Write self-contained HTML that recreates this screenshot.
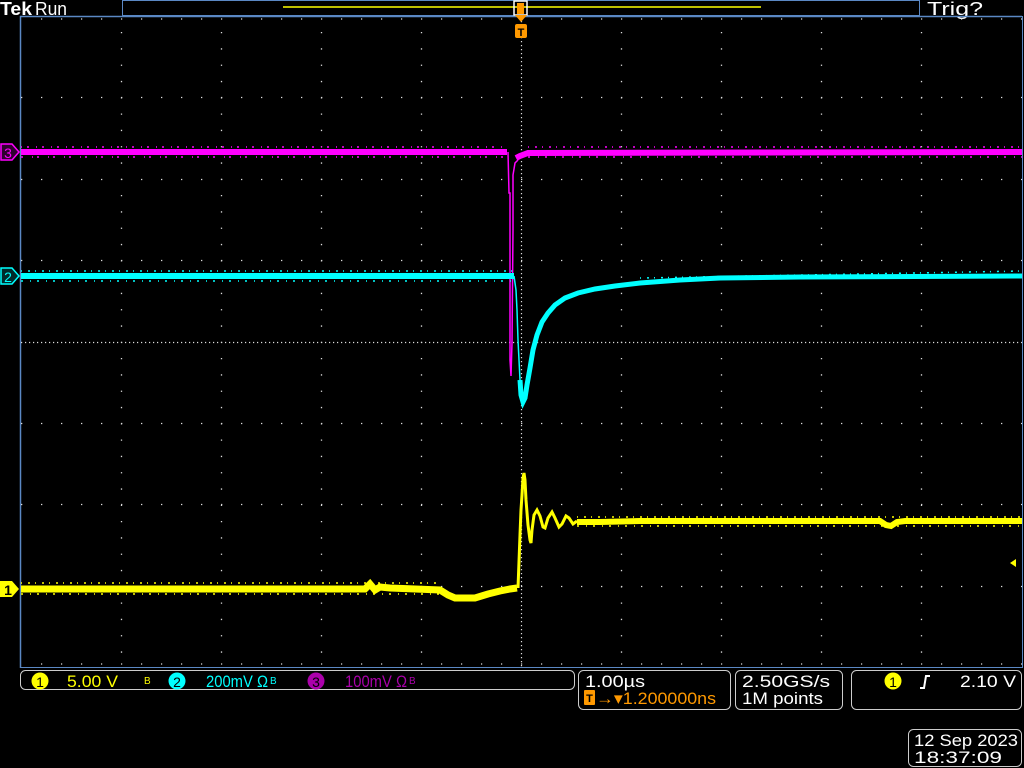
<!DOCTYPE html>
<html><head><meta charset="utf-8"><style>
html,body{margin:0;padding:0;background:#000;width:1024px;height:768px;overflow:hidden}
svg{display:block}
text{font-family:"Liberation Sans",sans-serif}
</style></head><body>
<svg width="1024" height="768" viewBox="0 0 1024 768" xmlns="http://www.w3.org/2000/svg">
<rect width="1024" height="768" fill="#000"/>
<!-- top bar -->
<text x="0" y="15" fill="#fff" font-size="18" font-weight="bold" textLength="32" lengthAdjust="spacingAndGlyphs">Tek</text>
<text x="35" y="15" fill="#fff" font-size="18" textLength="32" lengthAdjust="spacingAndGlyphs">Run</text>
<rect x="122.5" y="0.5" width="797" height="15" fill="none" stroke="#5b88c4" stroke-width="1"/>
<line x1="283" y1="7" x2="761" y2="7" stroke="#ffff00" stroke-width="1.5"/>
<rect x="514" y="1" width="13" height="14" fill="none" stroke="#fff" stroke-width="1.5"/>
<rect x="517" y="3" width="7" height="11" fill="#ff9900"/>
<text x="927" y="15" fill="#fff" font-size="18" textLength="56" lengthAdjust="spacingAndGlyphs">Trig?</text>
<!-- graticule border -->
<line x1="20.5" y1="16" x2="20.5" y2="668" stroke="#5b88c4" stroke-width="1.5"/>
<line x1="20" y1="16.5" x2="1022" y2="16.5" stroke="#5b88c4" stroke-width="1.5"/>
<line x1="1022.5" y1="16" x2="1022.5" y2="668" stroke="#5b88c4" stroke-width="1"/>
<line x1="20" y1="667.5" x2="1022" y2="667.5" stroke="#5b88c4" stroke-width="1"/>
<!-- grid dots -->
<g stroke="#ddd" stroke-width="1.3" stroke-dasharray="1.3 18.7">
<line x1="21" y1="97.5" x2="1022" y2="97.5"/>
<line x1="21" y1="179.5" x2="1022" y2="179.5"/>
<line x1="21" y1="260.5" x2="1022" y2="260.5"/>
<line x1="21" y1="423.5" x2="1022" y2="423.5"/>
<line x1="21" y1="504.5" x2="1022" y2="504.5"/>
<line x1="21" y1="586.5" x2="1022" y2="586.5"/>
</g>
<g stroke="#ddd" stroke-width="1.3" stroke-dasharray="1.3 15">
<line x1="121.5" y1="32" x2="121.5" y2="667"/>
<line x1="221.5" y1="32" x2="221.5" y2="667"/>
<line x1="321.5" y1="32" x2="321.5" y2="667"/>
<line x1="421.5" y1="32" x2="421.5" y2="667"/>
<line x1="621.5" y1="32" x2="621.5" y2="667"/>
<line x1="721.5" y1="32" x2="721.5" y2="667"/>
<line x1="821.5" y1="32" x2="821.5" y2="667"/>
<line x1="921.5" y1="32" x2="921.5" y2="667"/>
</g>
<g stroke="#ddd" stroke-width="1.2" stroke-dasharray="1.2 2.8">
<line x1="21" y1="342.5" x2="1022" y2="342.5"/>
<line x1="521.5" y1="17" x2="521.5" y2="667"/>
</g>
<g stroke="#ddd" stroke-width="1.2" stroke-dasharray="1.2 18.8">
<line x1="41" y1="19" x2="1022" y2="19"/>
<line x1="41" y1="664" x2="1022" y2="664"/>
</g>
<!-- trigger T marker -->
<polygon points="515,15 527,15 521,22" fill="#ff9900"/>
<rect x="515" y="24" width="12" height="14" rx="2" fill="#ff9900"/>
<text x="521" y="36" fill="#000" font-size="11" font-weight="bold" text-anchor="middle">T</text>
<!-- magenta trace ch3 -->
<polyline fill="none" stroke="#ff00ff" stroke-width="6" points="21,152 507,152"/>
<polyline fill="none" stroke="#ff00ff" stroke-width="1.5" stroke-dasharray="1 5 2 7" points="21,147 507,147"/>
<polyline fill="none" stroke="#ff00ff" stroke-width="1.5" stroke-dasharray="2 9 1 4" points="21,157 507,157"/>
<polyline fill="none" stroke="#ff00ff" stroke-width="6" points="516,158 520,156 528,153 1022,152"/>
<polyline fill="none" stroke="#ff00ff" stroke-width="1.5" stroke-dasharray="1 6 2 5" points="528,147 1022,147"/>
<polyline fill="none" stroke="#ff00ff" stroke-width="1.5" stroke-dasharray="2 8 1 6" points="528,157 1022,157"/>
<g fill="none" stroke="#ff00ff" stroke-width="1.5">
<polyline points="508,152 509,193 510,193 510,360 511,376 512,343 513,230 513,175 515,163 518,160"/>
</g>
<!-- cyan ch2 -->
<polyline fill="none" stroke="#00ffff" stroke-width="6" points="21,276 514,276"/>
<polyline fill="none" stroke="#00ffff" stroke-width="1.5" stroke-dasharray="1 6 2 5" points="21,271 514,271"/>
<polyline fill="none" stroke="#00ffff" stroke-width="1.5" stroke-dasharray="2 7 1 6" points="21,281 514,281"/>
<polyline fill="none" stroke="#00ffff" stroke-width="1.5" points="514,276 516,290 517,310 518,340 519,360 520,380"/>
<polyline fill="none" stroke="#00ffff" stroke-width="5" points="520,380 521,395 523,402 525,398 527,385 530,368 533,350 537,335 542,322 548,313 555,305 565,298 578,293 595,289 615,286 640,283 680,280 720,278 800,277 1022,276"/>
<polyline fill="none" stroke="#00ffff" stroke-width="1.5" stroke-dasharray="1 6 2 5" points="640,278 1022,271"/>
<!-- yellow ch1 -->
<polyline fill="none" stroke="#ffff00" stroke-width="7" points="21,589 365,589 370,584 375,590 380,587 390,588 440,590 448,595 455,598 475,598 488,594 500,591 510,589 517,588"/>
<polyline fill="none" stroke="#ffff00" stroke-width="1.5" stroke-dasharray="1 6 2 5" points="21,583 440,583"/>
<polyline fill="none" stroke="#ffff00" stroke-width="1.5" stroke-dasharray="2 7 1 6" points="21,594 440,594"/>
<polyline fill="none" stroke="#ffff00" stroke-width="3" points="518,588 520,535 521,510 522,495 523,478 524,473 525,480 526,500 528,525 530,540 531,543 532,530 534,515 537,510 540,516 543,527 545,528 548,518 552,512 555,518 559,527 562,524 566,516 569,518 573,524 577,521"/>
<polyline fill="none" stroke="#ffff00" stroke-width="6" points="577,522 600,522 640,521 700,521 880,521 886,525 891,526 897,522 905,521 1022,521"/>
<polyline fill="none" stroke="#ffff00" stroke-width="1.5" stroke-dasharray="1 6 2 5" points="577,517 1022,517"/>
<polyline fill="none" stroke="#ffff00" stroke-width="1.5" stroke-dasharray="2 7 1 6" points="577,526 1022,526"/>
<!-- ch markers left -->
<polygon points="1,144 12,144 19,152 12,160 1,160" fill="#300030" stroke="#ff00ff" stroke-width="1.5"/>
<text x="8" y="158" fill="#ff00ff" font-size="14" text-anchor="middle">3</text>
<polygon points="1,268 12,268 19,276 12,284 1,284" fill="#002a2a" stroke="#00ffff" stroke-width="1.5"/>
<text x="8" y="282" fill="#00ffff" font-size="14" text-anchor="middle">2</text>
<polygon points="0,581 12,581 19,589 12,597 0,597" fill="#ffff00"/>
<text x="8" y="595" fill="#000" font-size="14" font-weight="bold" text-anchor="middle">1</text>
<!-- trigger level marker -->
<polygon points="1010,563 1016,559 1016,567" fill="#ffff00"/>
<!-- bottom status boxes -->
<g fill="none" stroke="#ccc" stroke-width="1">
<rect x="20.5" y="670.5" width="554" height="19" rx="5"/>
<rect x="578.5" y="670.5" width="152" height="39" rx="5"/>
<rect x="735.5" y="670.5" width="107" height="39" rx="5"/>
<rect x="851.5" y="670.5" width="170" height="39" rx="5"/>
<rect x="908.5" y="729.5" width="113" height="37" rx="5"/>
</g>
<circle cx="40" cy="681" r="8.5" fill="#ffff00"/>
<text x="40" y="687" fill="#000" font-size="14" text-anchor="middle">1</text>
<text x="67" y="687" fill="#ffff00" font-size="17" textLength="51" lengthAdjust="spacingAndGlyphs">5.00 V</text>
<text x="144" y="684" fill="#ffff00" font-size="10">B</text>
<circle cx="177" cy="681" r="8.5" fill="#00ffff"/>
<text x="177" y="687" fill="#000" font-size="14" text-anchor="middle">2</text>
<text x="206" y="687" fill="#00ffff" font-size="17" textLength="62" lengthAdjust="spacingAndGlyphs">200mV Ω</text>
<text x="270" y="684" fill="#00ffff" font-size="10">B</text>
<circle cx="316" cy="681" r="8.5" fill="#aa00aa"/>
<text x="316" y="687" fill="#000" font-size="14" text-anchor="middle">3</text>
<text x="345" y="687" fill="#aa00aa" font-size="17" textLength="62" lengthAdjust="spacingAndGlyphs">100mV Ω</text>
<text x="409" y="684" fill="#aa00aa" font-size="10">B</text>
<text x="585" y="687" fill="#fff" font-size="17" textLength="60" lengthAdjust="spacingAndGlyphs">1.00µs</text>
<rect x="584" y="690" width="11" height="15" rx="1" fill="#ff9900"/>
<text x="589.5" y="702" fill="#000" font-size="11" font-weight="bold" text-anchor="middle">T</text>
<text x="596" y="704" fill="#ff9900" font-size="17" textLength="120" lengthAdjust="spacingAndGlyphs">→▾1.200000ns</text>
<text x="742" y="687" fill="#fff" font-size="17" textLength="88" lengthAdjust="spacingAndGlyphs">2.50GS/s</text>
<text x="742" y="704" fill="#fff" font-size="17" textLength="81" lengthAdjust="spacingAndGlyphs">1M points</text>
<circle cx="893" cy="681" r="8.5" fill="#ffff00"/>
<text x="893" y="687" fill="#000" font-size="14" text-anchor="middle">1</text>
<path d="M920,688 L924,688 L926,676 L930,676" fill="none" stroke="#fff" stroke-width="2"/>
<text x="960" y="687" fill="#fff" font-size="17" textLength="56" lengthAdjust="spacingAndGlyphs">2.10 V</text>
<text x="914" y="746" fill="#fff" font-size="17" textLength="104" lengthAdjust="spacingAndGlyphs">12 Sep  2023</text>
<text x="914" y="763" fill="#fff" font-size="17" textLength="88" lengthAdjust="spacingAndGlyphs">18:37:09</text>
</svg>
</body></html>
